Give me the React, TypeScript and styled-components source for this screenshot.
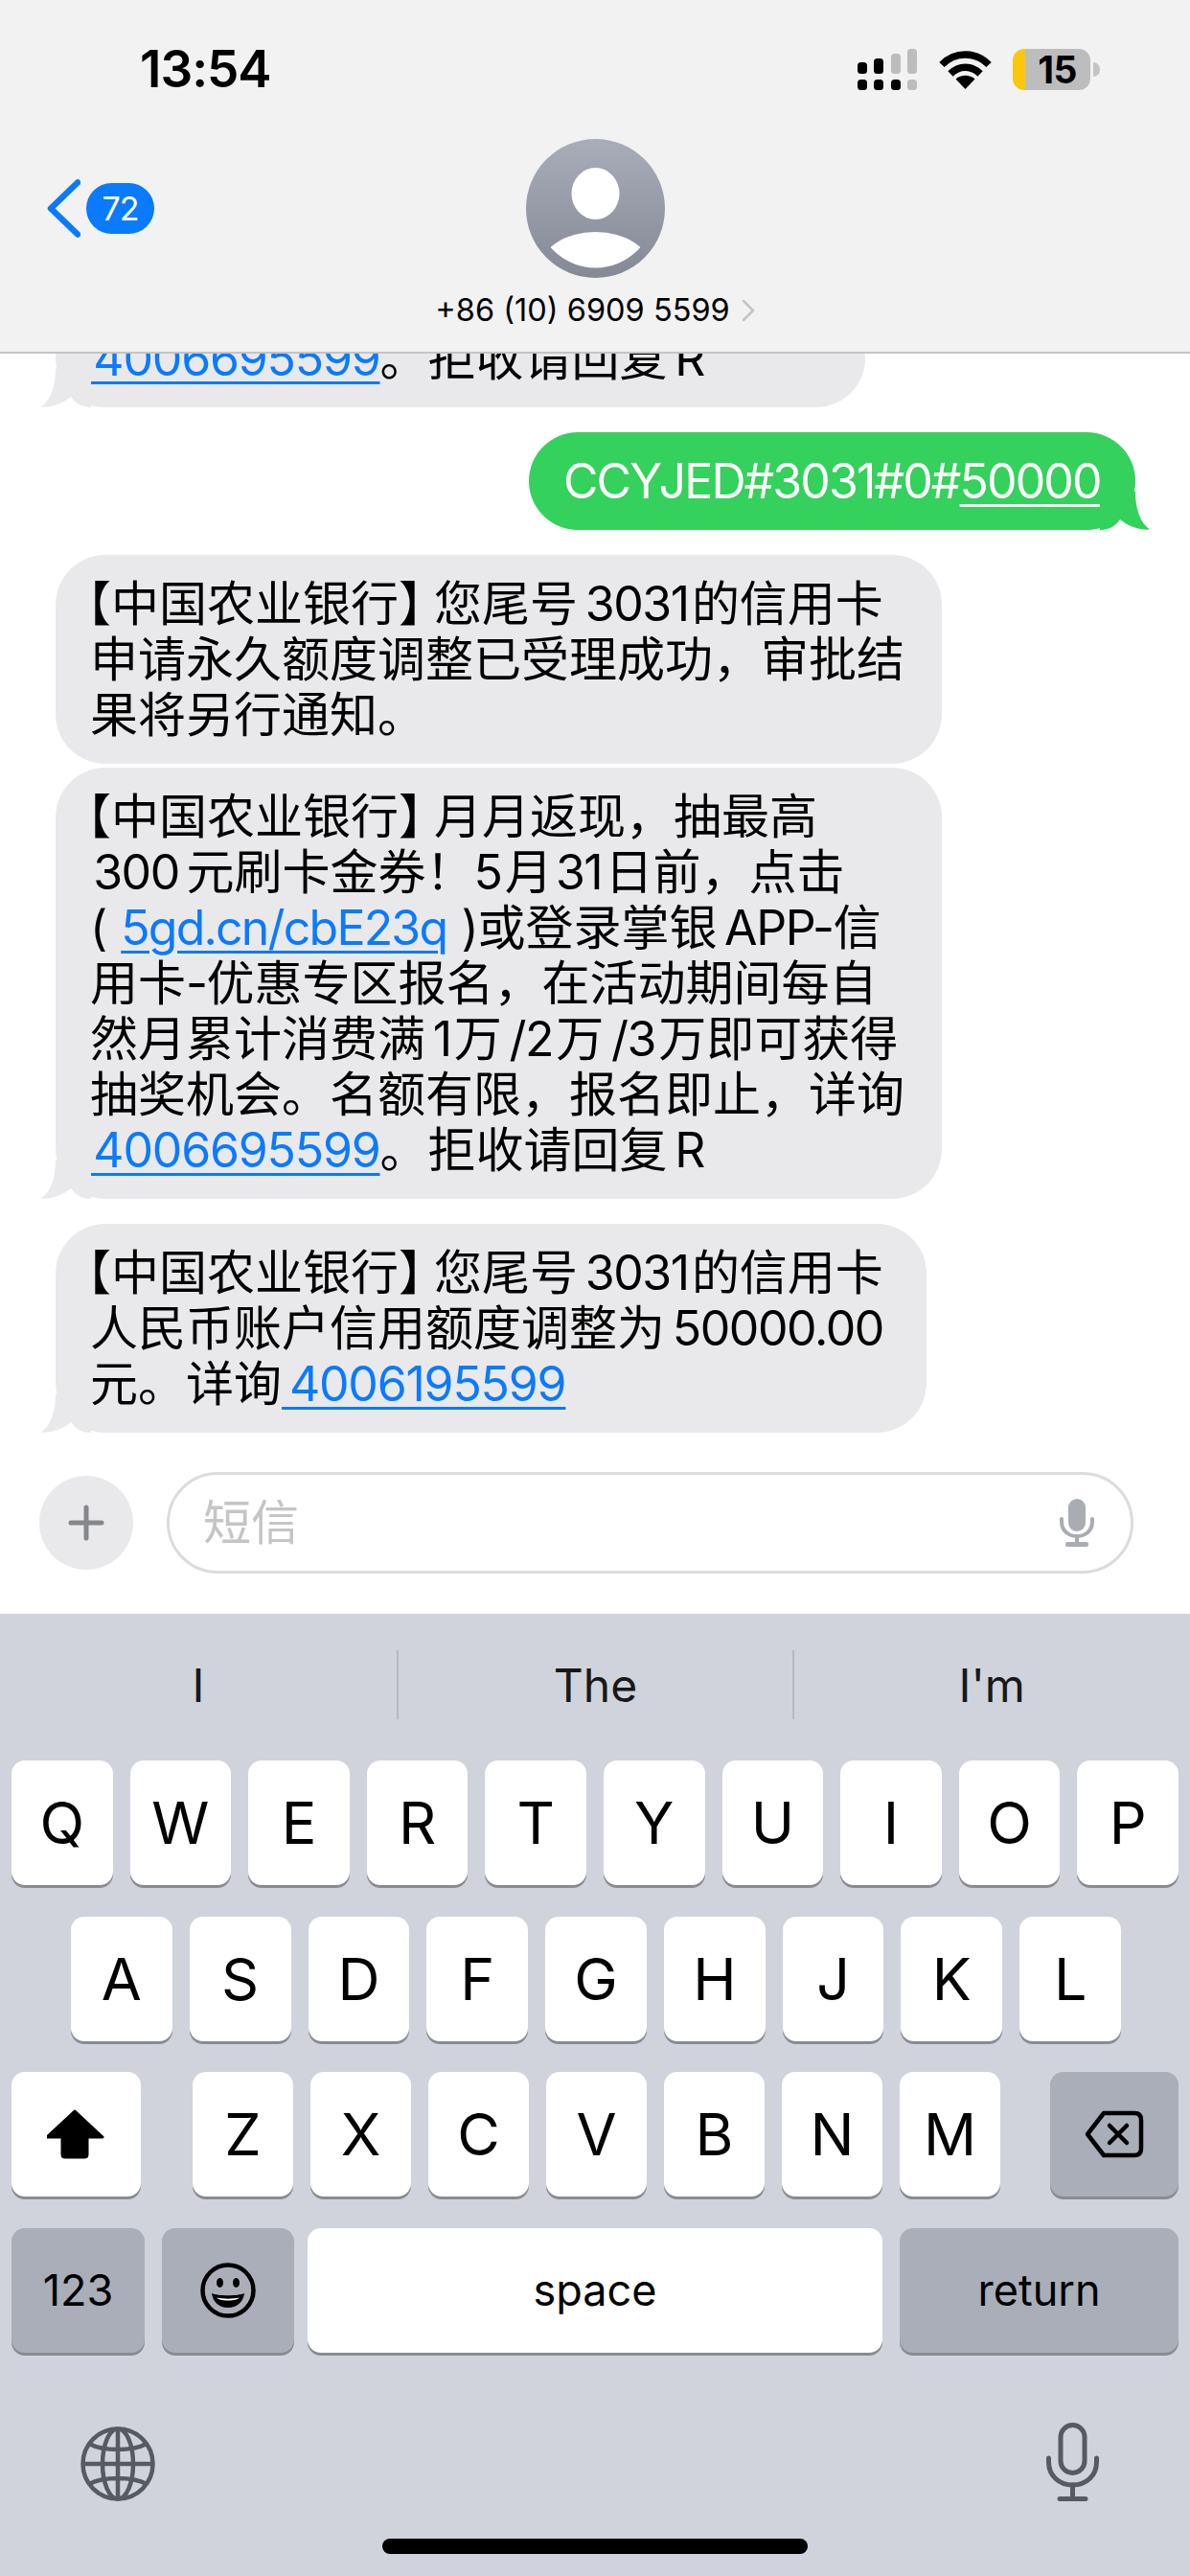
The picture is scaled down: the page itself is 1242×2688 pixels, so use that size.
import * as React from 'react';
import styled, { createGlobalStyle } from 'styled-components';

const FONT = `Inter, 'Noto Sans CJK SC', sans-serif`;

const GlobalStyle = createGlobalStyle`
  html, body {
    margin: 0;
    padding: 0;
    background: #fff;
  }
`;

const Screen = styled.div`
  width: 1242px;
  height: 2688px;
  display: flex;
  flex-direction: column;
  overflow: hidden;
  background: #fff;
  font-family: ${FONT};
  color: #000;
`;

/* header */

const Header = styled.header`
  height: 369px;
  flex-shrink: 0;
  box-sizing: border-box;
  padding-top: 51px;
  background: #f2f2f3;
  border-bottom: 2px solid #c4c4c6;
`;

const StatusBar = styled.div`
  height: 43px;
  display: flex;
  align-items: center;
  padding: 0 104px 0 146px;
`;

const Clock = styled.div`
  flex: 1;
  font-size: 53px;
  font-weight: 600;
  letter-spacing: -1px;
  line-height: 43px;
`;

const StatusIcons = styled.div`
  display: flex;
  align-items: center;
  gap: 22px;
`;

const Battery = styled.div`
  position: relative;
  width: 81px;
  height: 43px;
  border-radius: 12px;
  display: flex;
  align-items: center;
  justify-content: center;
  padding-left: 12px;
  box-sizing: border-box;
  background: linear-gradient(to right, #fcc70a 13px, #bdbdbd 13px);
  font-size: 39px;
  font-weight: 700;
  letter-spacing: -0.5px;
  &::after {
    content: '';
    position: absolute;
    right: -10px;
    top: 14px;
    width: 7px;
    height: 15px;
    border-radius: 0 8px 8px 0;
    background: #c4c4c4;
  }
`;

const NavRow = styled.div`
  display: grid;
  grid-template-columns: 1fr auto 1fr;
  margin-top: 51px;
`;

const BackLink = styled.div`
  height: 145px;
  padding-left: 49px;
  display: flex;
  align-items: center;
  gap: 6px;
`;

const CountBadge = styled.span`
  width: 71px;
  height: 53px;
  border-radius: 27px;
  background: #0a7aff;
  color: #fff;
  font-size: 34px;
  letter-spacing: -1px;
  display: flex;
  align-items: center;
  justify-content: center;
`;

const Contact = styled.div`
  display: flex;
  flex-direction: column;
  align-items: center;
`;

const ContactName = styled.div`
  margin-top: 16px;
  display: flex;
  align-items: center;
  gap: 12px;
  font-size: 32.5px;
  line-height: 36px;
  white-space: pre;
`;

/* messages */

const Thread = styled.main`
  flex: 1;
  min-height: 0;
  overflow: hidden;
  display: flex;
  flex-direction: column;
  justify-content: flex-end;
  padding: 0 57px 41px 58px;
`;

const Bubble = styled.div<{ $width: number; $sent?: boolean; $tight?: boolean }>`
  position: relative;
  flex-shrink: 0;
  box-sizing: border-box;
  width: ${(p) => p.$width}px;
  align-self: ${(p) => (p.$sent ? 'flex-end' : 'flex-start')};
  margin-bottom: ${(p) => (p.$tight ? 4 : 26)}px;
  padding: 22px 0 22px 36px;
  border-radius: 52px;
  background: ${(p) => (p.$sent ? '#34d15c' : '#e9e9eb')};
  color: ${(p) => (p.$sent ? '#fff' : '#000')};
  font-size: 50px;
  line-height: 58px;
  letter-spacing: ${(p) => (p.$sent ? -1.9 : 0)}px;
  &:last-child {
    margin-bottom: 0;
  }
`;

const Line = styled.div`
  white-space: pre;
`;

// the brackets use the font's half-width forms, as the phone sets them
const OpenBracket = styled.span`
  font-feature-settings: 'halt' 1;
  margin-left: -3px;
`;

const CloseBracket = styled.span`
  font-feature-settings: 'halt' 1;
  margin-right: 12px;
`;

/* digits and latin runs set tighter than the CJK around them */
const Latin = styled.span`
  letter-spacing: -1.4px;
`;

const Link = styled.span`
  color: #0a7aff;
  letter-spacing: -1.2px;
  text-decoration: underline;
  text-decoration-thickness: 3px;
  text-underline-offset: 6px;
`;

const UrlLink = styled(Link)`
  letter-spacing: -1.8px;
`;

const SentLink = styled(Link)`
  color: #fff;
  letter-spacing: inherit;
`;

const Tail = styled.svg<{ $sent?: boolean }>`
  position: absolute;
  bottom: 0;
  width: 52px;
  height: 40px;
  ${(p) => (p.$sent ? 'right: -15px; transform: scaleX(-1);' : 'left: -15px;')}
`;

/* composer */

const Composer = styled.div`
  height: 148px;
  flex-shrink: 0;
  box-sizing: border-box;
  padding: 0 59px 42px 41px;
  display: flex;
  align-items: center;
  gap: 35px;
`;

const PlusButton = styled.div`
  width: 98px;
  height: 98px;
  flex-shrink: 0;
  border-radius: 50%;
  background: #e9e9eb;
  display: flex;
  align-items: center;
  justify-content: center;
`;

const Field = styled.div`
  flex: 1;
  height: 106px;
  box-sizing: border-box;
  border: 3px solid #dcdcde;
  border-radius: 53px;
  padding: 0 38px 0 35px;
  display: flex;
  align-items: center;
  justify-content: space-between;
`;

const Placeholder = styled.span`
  font-size: 50px;
  line-height: 58px;
  color: #c5c5c7;
`;

/* keyboard */

const Keyboard = styled.section`
  height: 1004px;
  flex-shrink: 0;
  box-sizing: border-box;
  padding-top: 38px;
  background: #d0d3db;
  display: flex;
  flex-direction: column;
`;

const Suggestions = styled.div`
  height: 72px;
  display: grid;
  grid-template-columns: repeat(3, 1fr);
  margin: 0 1px 43px 0;
`;

const Suggestion = styled.div`
  display: flex;
  align-items: center;
  justify-content: center;
  font-size: 48px;
  color: #18181a;
  border-left: 2px solid #b6b9c1;
  &:first-child {
    border-left: 0;
  }
`;

const KeyRows = styled.div`
  display: flex;
  flex-direction: column;
  gap: 32.5px;
`;

const KeyRow = styled.div<{ $left?: number; $right?: number }>`
  display: flex;
  gap: 18px;
  padding: 0 ${(p) => p.$right ?? 12}px 0 ${(p) => p.$left ?? 12}px;
`;

const Key = styled.div<{ $width?: number; $dark?: boolean; $before?: number; $after?: number; $small?: boolean }>`
  flex: ${(p) => (p.$width ? `0 0 ${p.$width}px` : '1 1 0')};
  height: 130px;
  margin-left: ${(p) => p.$before ?? 0}px;
  margin-right: ${(p) => p.$after ?? 0}px;
  border-radius: 14px;
  background: ${(p) => (p.$dark ? '#a9aeb9' : '#fff')};
  box-shadow: 0 3px 0 #898b8f;
  display: flex;
  align-items: center;
  justify-content: center;
  font-size: ${(p) => (p.$small ? 45 : 61)}px;
`;

const KeyboardFooter = styled.div`
  display: flex;
  justify-content: space-between;
  align-items: flex-end;
  height: 82px;
  margin-top: 73px;
  padding: 0 95px 0 84px;
`;

const HomeIndicator = styled.div`
  width: 444px;
  height: 16px;
  margin: 39px auto 0;
  border-radius: 8px;
  background: #000;
`;

const BubbleTail = ({ sent, fill }: { sent?: boolean; fill: string }) => (
  <Tail $sent={sent} viewBox="0 0 52 40">
    <path d="M15 0C15 20 9 33 0 39.6 12 40 23 36 31 29 36 36 42 40 52 40V0Z" fill={fill} />
  </Tail>
);

const SignalIcon = () => (
  <svg width="63" height="43" viewBox="0 0 63 43">
    <rect x="0" y="14" width="10" height="12" rx="3.5" />
    <rect x="17" y="10" width="10" height="16" rx="3.5" />
    <rect x="35" y="5" width="10" height="21" rx="3.5" fill="#bdbdbd" />
    <rect x="52" y="0" width="10" height="26" rx="3.5" fill="#bdbdbd" />
    <rect x="0" y="32" width="10" height="11" rx="3.5" />
    <rect x="17" y="32" width="10" height="11" rx="3.5" />
    <rect x="35" y="32" width="10" height="11" rx="3.5" />
    <rect x="52" y="32" width="10" height="11" rx="3.5" fill="#bdbdbd" />
  </svg>
);

const WifiIcon = () => (
  <svg width="55" height="41" viewBox="0 0 55 41" fill="none" stroke="#000" strokeWidth="7.5">
    <path d="M3 15.5C16.5 1.5 38.5 1.5 52 15.5" />
    <path d="M12 25C21 16 34 16 43 25" />
    <path d="M17.5 30.5C23 25.5 32 25.5 37.5 30.5L27.5 41Z" fill="#000" stroke="none" />
  </svg>
);

const BackChevron = () => (
  <svg width="35" height="61" viewBox="0 0 35 61" fill="none" stroke="#0a7aff" strokeWidth="6.5" strokeLinecap="round" strokeLinejoin="round">
    <path d="M32 3.5 4 30.5 32 57.5" />
  </svg>
);

const Avatar = () => (
  <svg width="145" height="145" viewBox="0 0 145 145">
    <defs>
      <linearGradient id="avatarFill" x1="0" y1="0" x2="0" y2="1">
        <stop offset="0" stopColor="#a9adb9" />
        <stop offset="1" stopColor="#858995" />
      </linearGradient>
      <clipPath id="avatarBody">
        <circle cx="72.5" cy="72.5" r="62" />
      </clipPath>
    </defs>
    <circle cx="72.5" cy="72.5" r="72.5" fill="url(#avatarFill)" />
    <ellipse cx="72.5" cy="57" rx="25" ry="27" fill="#fff" />
    <ellipse cx="72.5" cy="136" rx="58" ry="39" fill="#fff" clipPath="url(#avatarBody)" />
  </svg>
);

const SmallChevron = () => (
  <svg width="14" height="24" viewBox="0 0 14 24" fill="none" stroke="#c4c4c6" strokeWidth="2.5" strokeLinecap="round" strokeLinejoin="round">
    <path d="M2 2 12 12 2 22" />
  </svg>
);

const PlusIcon = () => (
  <svg width="38" height="38" viewBox="0 0 38 38" stroke="#85878d" strokeWidth="5" strokeLinecap="round">
    <path d="M19 3V35M3 19H35" />
  </svg>
);

const FieldMic = () => (
  <svg width="36" height="50" viewBox="0 0 36 50" fill="none">
    <rect x="9" y="0" width="18" height="34" rx="9" fill="#a9acb3" />
    <path d="M2 21V24C2 33 9 39 18 39S34 33 34 24V21" stroke="#a9acb3" strokeWidth="4" strokeLinecap="round" />
    <path d="M18 39V47" stroke="#a9acb3" strokeWidth="4" />
    <rect x="6" y="45" width="24" height="5" rx="2" fill="#a9acb3" />
  </svg>
);

const ShiftIcon = () => (
  <svg width="62" height="52" viewBox="2 0 62 52">
    <path
      d="M31 2 60 29H44V47Q44 50 41 50H21Q18 50 18 47V29H2Z"
      fill="#000"
      stroke="#000"
      strokeWidth="3"
      strokeLinejoin="round"
    />
  </svg>
);

const BackspaceIcon = () => (
  <svg width="62" height="50" viewBox="0 0 62 50" fill="none" stroke="#000" strokeWidth="4.5" strokeLinecap="round" strokeLinejoin="round">
    <path d="M20 3H52Q59 3 59 10V40Q59 47 52 47H20L3 25Z" />
    <path d="M26 16 44 34M44 16 26 34" />
  </svg>
);

const EmojiIcon = () => (
  <svg width="58" height="58" viewBox="0 0 58 58" fill="none">
    <circle cx="29" cy="29" r="26.5" stroke="#000" strokeWidth="4.5" />
    <ellipse cx="20.5" cy="21" rx="3.5" ry="5" fill="#000" />
    <ellipse cx="37.5" cy="21" rx="3.5" ry="5" fill="#000" />
    <path d="M12 32C18 35 40 35 46 32 45 41 38 47 29 47S13 41 12 32Z" fill="#000" />
    <path d="M17 36.5C23 38 35 38 41 36.5 39 38.5 36 39.5 29 39.5S19 38.5 17 36.5Z" fill="#fff" />
  </svg>
);

const GlobeIcon = () => (
  <svg width="78" height="78" viewBox="0 0 78 78" fill="none" stroke="#565a61" strokeWidth="4.5">
    <circle cx="39" cy="39" r="36.5" />
    <ellipse cx="39" cy="39" rx="16" ry="36.5" />
    <path d="M39 2.5V75.5M2.5 39H75.5M9 18C24 26 54 26 69 18M9 60C24 52 54 52 69 60" />
  </svg>
);

const DictationIcon = () => (
  <svg width="55" height="82" viewBox="0 0 55 82" fill="none" stroke="#565a61" strokeWidth="5" strokeLinecap="round">
    <rect x="15" y="2.5" width="25" height="50" rx="12.5" />
    <path d="M2.5 37V41C2.5 55 13 65 27.5 65S52.5 55 52.5 41V37" />
    <path d="M27.5 65V79M14 79.5H41" />
  </svg>
);

const ROW_ONE = ['Q', 'W', 'E', 'R', 'T', 'Y', 'U', 'I', 'O', 'P'];
const ROW_TWO = ['A', 'S', 'D', 'F', 'G', 'H', 'J', 'K', 'L'];
const ROW_THREE = ['Z', 'X', 'C', 'V', 'B', 'N', 'M'];

const BankPrefix = () => (
  <>
    <OpenBracket>【</OpenBracket>中国农业银行<CloseBracket>】</CloseBracket>
  </>
);

export default function App() {
  return (
    <Screen lang="zh-CN">
      <GlobalStyle />
      <Header>
        <StatusBar>
          <Clock>13:54</Clock>
          <StatusIcons>
            <SignalIcon />
            <WifiIcon />
            <Battery>15</Battery>
          </StatusIcons>
        </StatusBar>
        <NavRow>
          <BackLink>
            <BackChevron />
            <CountBadge>72</CountBadge>
          </BackLink>
          <Contact>
            <Avatar />
            <ContactName>
              +86 (10) 6909 5599
              <SmallChevron />
            </ContactName>
          </Contact>
        </NavRow>
      </Header>

      <Thread>
        <Bubble $width={845}>
          <Line>
            <Link>{'\u200A4006695599'}</Link>。拒收请回复<Latin>{'\u2009R'}</Latin>
          </Line>
          <BubbleTail fill="#e9e9eb" />
        </Bubble>
        <Bubble $width={633} $sent>
          <Line>
            CCYJED#3031#0#<SentLink>50000</SentLink>
          </Line>
          <BubbleTail sent fill="#34d15c" />
        </Bubble>
        <Bubble $width={925} $tight>
          <Line>
            <BankPrefix />
            您尾号<Latin>{'\u20093031\u200A'}</Latin>的信用卡
          </Line>
          <Line>申请永久额度调整已受理成功，审批结</Line>
          <Line>果将另行通知。</Line>
        </Bubble>
        <Bubble $width={925}>
          <Line>
            <BankPrefix />
            月月返现，抽最高
          </Line>
          <Line>
            <Latin>{'\u200A300\u2009'}</Latin>元刷卡金券！<Latin>{'5\u200A'}</Latin>月<Latin>{'\u200A31\u200A'}</Latin>日前，点击
          </Line>
          <Line>
            <Latin>{'(\u2009\u2009'}</Latin>
            <UrlLink>5gd.cn/cbE23q</UrlLink>
            <Latin>{'\u2009\u2009)'}</Latin>或登录掌银<Latin>{'\u2009APP-'}</Latin>信
          </Line>
          <Line>
            用卡<Latin>-</Latin>优惠专区报名，在活动期间每自
          </Line>
          <Line>
            然月累计消费满<Latin>{'\u20091\u200A'}</Latin>万<Latin>{'\u2009/2\u200A'}</Latin>万<Latin>{'\u2009/3\u200A'}</Latin>万即可获得
          </Line>
          <Line>抽奖机会。名额有限，报名即止，详询</Line>
          <Line>
            <Link>{'\u200A4006695599'}</Link>。拒收请回复<Latin>{'\u2009R'}</Latin>
          </Line>
          <BubbleTail fill="#e9e9eb" />
        </Bubble>
        <Bubble $width={909}>
          <Line>
            <BankPrefix />
            您尾号<Latin>{'\u20093031\u200A'}</Latin>的信用卡
          </Line>
          <Line>
            人民币账户信用额度调整为<Latin>{'\u200950000.00'}</Latin>
          </Line>
          <Line>
            元。详询<Link>{'\u20094006195599'}</Link>
          </Line>
          <BubbleTail fill="#e9e9eb" />
        </Bubble>
      </Thread>

      <Composer>
        <PlusButton>
          <PlusIcon />
        </PlusButton>
        <Field>
          <Placeholder>短信</Placeholder>
          <FieldMic />
        </Field>
      </Composer>

      <Keyboard>
        <Suggestions>
          <Suggestion>I</Suggestion>
          <Suggestion>The</Suggestion>
          <Suggestion>I'm</Suggestion>
        </Suggestions>
        <KeyRows>
          <KeyRow>
            {ROW_ONE.map((k) => (
              <Key key={k}>{k}</Key>
            ))}
          </KeyRow>
          <KeyRow $left={74} $right={72}>
            {ROW_TWO.map((k) => (
              <Key key={k}>{k}</Key>
            ))}
          </KeyRow>
          <KeyRow>
            <Key $width={135} $after={36}>
              <ShiftIcon />
            </Key>
            {ROW_THREE.map((k) => (
              <Key key={k}>{k}</Key>
            ))}
            <Key $width={134} $dark $before={34}>
              <BackspaceIcon />
            </Key>
          </KeyRow>
          <KeyRow>
            <Key $width={139} $dark $small>
              123
            </Key>
            <Key $width={138} $dark $after={-4}>
              <EmojiIcon />
            </Key>
            <Key $width={600} $small>
              space
            </Key>
            <Key $dark $small>
              return
            </Key>
          </KeyRow>
        </KeyRows>
        <KeyboardFooter>
          <GlobeIcon />
          <DictationIcon />
        </KeyboardFooter>
        <HomeIndicator />
      </Keyboard>
    </Screen>
  );
}
